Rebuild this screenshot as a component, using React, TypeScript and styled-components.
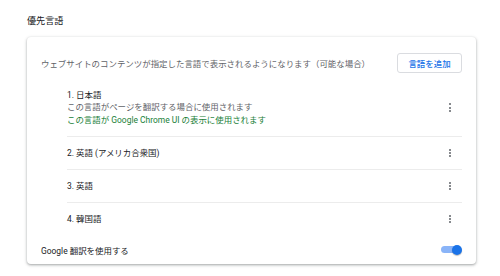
import React from "react";
import styled, { createGlobalStyle } from "styled-components";

const GlobalStyle = createGlobalStyle`
  html, body {
    margin: 0;
    padding: 0;
    background: #fff;
  }
  body {
    font-family: Roboto, "Noto Sans CJK JP", sans-serif;
    color: #202124;
  }
`;

const Page = styled.div`
  width: 500px;
  height: 276px;
  padding: 15px 24px 0 27px;
  box-sizing: border-box;
`;

const SectionTitle = styled.h2`
  margin: 0 0 10px;
  font-size: 9.1px;
  line-height: 12px;
  font-weight: 400;
  color: #202124;
`;

const Card = styled.div`
  width: 449px;
  height: 227px;
  box-sizing: border-box;
  padding: 16px 14px 0 14px;
  border-radius: 4px;
  background: #fff;
  box-shadow: 0 1px 2px rgba(60, 64, 67, 0.3), 0 1px 3px 1px rgba(60, 64, 67, 0.15);
  display: flex;
  flex-direction: column;
`;

const HeaderRow = styled.div`
  display: flex;
  align-items: center;
  justify-content: space-between;
  height: 20px;
`;

const Secondary = styled.span`
  font-size: 8.45px;
  color: #5f6368;
`;

const AddButton = styled.button`
  width: 65px;
  height: 20px;
  box-sizing: border-box;
  border: 1px solid #dadce0;
  border-radius: 3px;
  background: #fff;
  color: #1a73e8;
  font-family: inherit;
  font-size: 8.45px;
  font-weight: 500;
  padding: 0;
`;

const LangList = styled.div`
  margin: 6px 0 0 26px;
  display: flex;
  flex-direction: column;
`;

const LangRow = styled.div<{ $last?: boolean }>`
  display: flex;
  align-items: center;
  justify-content: space-between;
  padding: 9.75px 0;
  border-bottom: ${(p) => (p.$last ? "none" : "1px solid #ececec")};
  min-height: 12.5px;
`;

const LangText = styled.div`
  display: flex;
  flex-direction: column;
  font-size: 8.45px;
  line-height: 12.5px;
`;

const Line = styled.span<{ $tone?: "main" | "sub" | "green" }>`
  color: ${(p) =>
    p.$tone === "green" ? "#188038" : p.$tone === "sub" ? "#5f6368" : "#202124"};
`;

const MoreButton = styled.div`
  width: 24px;
  display: flex;
  flex-direction: column;
  align-items: center;
  gap: 1.4px;
`;

const Dot = styled.span`
  width: 2px;
  height: 2px;
  border-radius: 50%;
  background: #5f6368;
`;

const FooterRow = styled.div`
  display: flex;
  align-items: center;
  justify-content: space-between;
  height: 32px;
`;

const FooterLabel = styled.span`
  font-size: 8.45px;
  color: #202124;
`;

const Toggle = styled.div`
  position: relative;
  width: 21px;
  height: 10px;
  display: flex;
  align-items: center;
`;

const Track = styled.div`
  width: 18px;
  height: 7px;
  border-radius: 4px;
  background: #8ab4f8;
`;

const Knob = styled.span`
  position: absolute;
  right: 0;
  top: 0;
  width: 10px;
  height: 10px;
  border-radius: 50%;
  background: #1a73e8;
  box-shadow: 0 1px 1px rgba(0, 0, 0, 0.25);
`;

const More = () => (
  <MoreButton>
    <Dot />
    <Dot />
    <Dot />
  </MoreButton>
);

const languages = ["2. 英語 (アメリカ合衆国)", "3. 英語", "4. 韓国語"];

export default function App() {
  return (
    <>
      <GlobalStyle />
      <Page>
        <SectionTitle>優先言語</SectionTitle>
        <Card>
          <HeaderRow>
            <Secondary>
              ウェブサイトのコンテンツが指定した言語で表示されるようになります（可能な場合）
            </Secondary>
            <AddButton>言語を追加</AddButton>
          </HeaderRow>
          <LangList>
            <LangRow>
              <LangText>
                <Line>1. 日本語</Line>
                <Line $tone="sub">この言語がページを翻訳する場合に使用されます</Line>
                <Line $tone="green">この言語が Google Chrome UI の表示に使用されます</Line>
              </LangText>
              <More />
            </LangRow>
            {languages.map((l, i) => (
              <LangRow key={l} $last={i === languages.length - 1}>
                <LangText>
                  <Line>{l}</Line>
                </LangText>
                <More />
              </LangRow>
            ))}
          </LangList>
          <FooterRow>
            <FooterLabel>Google 翻訳を使用する</FooterLabel>
            <Toggle>
              <Track />
              <Knob />
            </Toggle>
          </FooterRow>
        </Card>
      </Page>
    </>
  );
}
